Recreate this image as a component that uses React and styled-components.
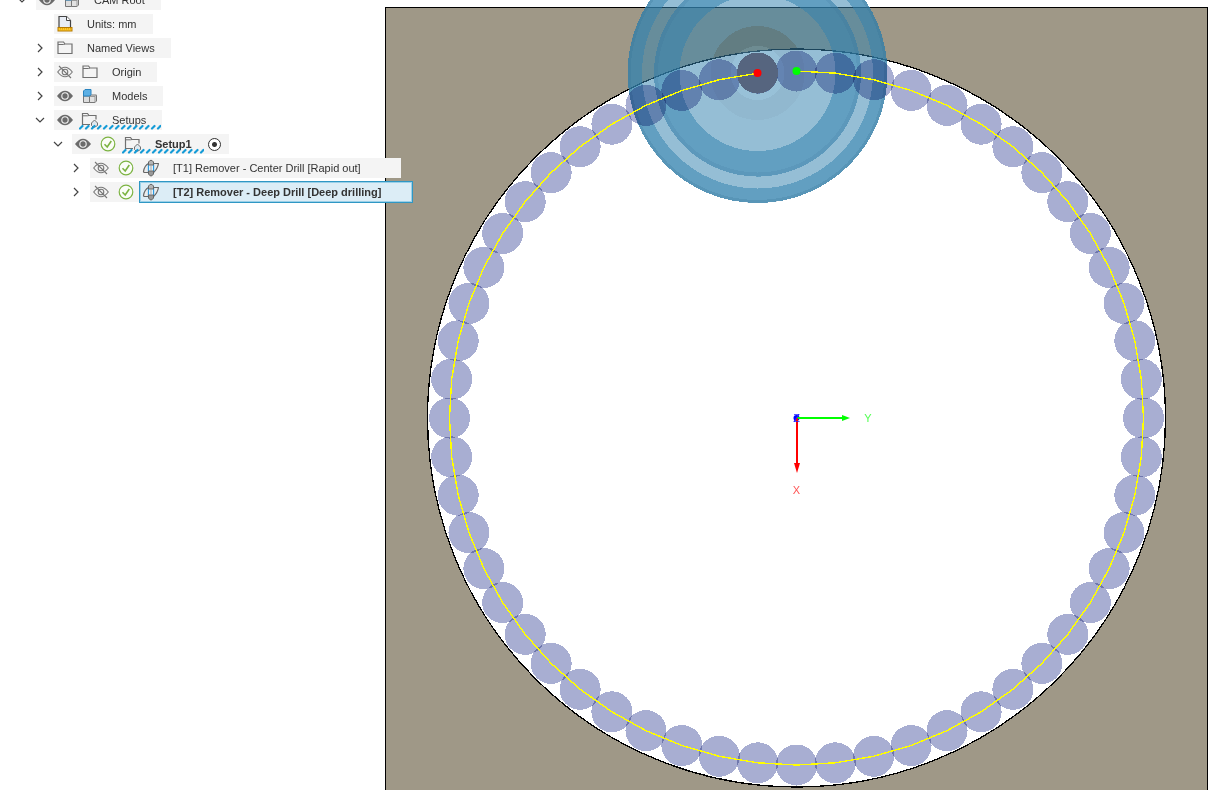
import React from "react";
import styled, { createGlobalStyle } from "styled-components";

const GlobalStyle = createGlobalStyle`
  *, *::before, *::after { box-sizing: border-box; }
  body { margin: 0; background: #fff; font-family: "Liberation Sans", Arial, sans-serif; font-size: 11px; color: #333; }
`;

const Workspace = styled.main`
  display: flex;
  height: 100vh;
  overflow: hidden;
`;

const Browser = styled.nav`
  position: relative;
  z-index: 1;
  flex: 0 0 385px;
  min-width: 0;
`;

const Tree = styled.ul`
  list-style: none;
  margin: -12px 0 0;
  padding: 0;
`;

const Row = styled.li`
  display: flex;
  align-items: center;
  height: 24px;
  width: max-content;
  padding-left: ${(p) => p.$level * 18 + 14}px;
`;

const IconButton = styled.button`
  display: flex;
  align-items: center;
  justify-content: center;
  width: 22px;
  height: 20px;
  margin: 0;
  padding: 0;
  border: 0;
  background: none;
  color: #6a6a6a;
`;

const Expander = styled(IconButton)`
  width: 16px;
  margin-right: 6px;
  color: #444;
`;

const ExpanderSpace = styled.span`
  width: 22px;
`;

const Item = styled.div`
  display: flex;
  align-items: center;
  gap: 3px;
  height: 20px;
  padding-right: ${(p) => (p.$selected ? 0 : p.$wide ? 40 : 16)}px;
  background: #f4f4f4;
`;

const Slot = styled.span`
  display: flex;
  align-items: center;
  justify-content: center;
  width: 22px;
  height: 20px;
`;

const Node = styled.div`
  position: relative;
  display: flex;
  align-items: center;
  gap: 11px;
`;

const SelectedNode = styled(Node)`
  height: 22px;
  margin-left: -1px;
  padding: 0 32px 0 1px;
  background: #dcedf6;
  box-shadow: inset 0 0 0 1px #2f97c4, inset 0 0 0 2px #9bd0e8;
`;

const Label = styled.span`
  line-height: 20px;
  white-space: nowrap;
  font-weight: ${(p) => (p.$bold ? 700 : 400)};
`;

const Squiggle = styled.svg`
  position: absolute;
  left: 0;
  bottom: 0;
  width: 82px;
  height: 8px;
`;

const ActiveRadio = styled.input`
  appearance: none;
  width: 13px;
  height: 13px;
  margin: 0 -8px 0 13px;
  border: 1px solid #333;
  border-radius: 50%;
  background: radial-gradient(circle, #333 2px, #fff 3px);
`;

const Viewport = styled.section`
  flex: 1 1 0;
  min-width: 0;
`;

const Scene = styled.svg`
  display: block;
  width: 100%;
  height: 100%;
`;

const Hole = styled.circle`
  fill: #a8aed2;
  mix-blend-mode: multiply;
`;

const Chevron = ({ open }) => (
  <svg width="10" height="10" viewBox="0 0 10 10" fill="none" stroke="currentColor" strokeWidth="1.200">
    <path d={open ? "M1 3 L5 7 L9 3" : "M3 1 L7 5 L3 9"} />
  </svg>
);

const Eye = () => (
  <svg width="16" height="12" viewBox="0 0 16 12">
    <path d="M0 6 Q8 -4.500 16 6 Q8 16.500 0 6Z" fill="#6b6b6b" />
    <circle cx="8" cy="6" r="3.200" fill="none" stroke="#f4f4f4" strokeWidth="1.100" />
  </svg>
);

const EyeOff = () => (
  <svg width="16" height="14" viewBox="0 0 16 14" fill="none" stroke="#777" strokeWidth="1.100">
    <path d="M.7 7 Q8 -2.500 15.300 7 Q8 16.500 .7 7Z" />
    <circle cx="8" cy="7" r="2.800" />
    <path d="M2 1 L14 13" />
  </svg>
);

const Check = () => (
  <svg width="16" height="16" viewBox="0 0 16 16" fill="none" stroke="#7cb342">
    <circle cx="8" cy="8" r="6.800" strokeWidth="1.200" fill="#fbfdf8" />
    <path d="M4.500 8.300 L7.200 11 L11.300 5" strokeWidth="1.600" />
  </svg>
);

const Folder = () => (
  <svg width="16" height="14" viewBox="0 0 16 14" fill="none" stroke="#707070" strokeWidth="1.200">
    <path d="M1 1 H6.500 L8 3 H15 V12.500 H1Z" />
    <path d="M1 3.500 H6.500 L8 3" fill="#ccc" strokeWidth="1" />
  </svg>
);

const SetupFolder = () => (
  <svg width="18" height="18" viewBox="0 0 18 18" fill="none" stroke="#707070" strokeWidth="1.200">
    <path d="M9 13.500 H1.500 V2.500 H6.500 L8 4.500 H15 V8.500" />
    <path d="M1.500 4.800 H6.500 L8 4.500" fill="#ccc" strokeWidth="1" />
    <path d="M10.500 14.500 V12 L13.500 9 L16.500 12 V14.500 L14 16 H12 Z" fill="#dfe9f0" strokeWidth="1" />
  </svg>
);

const Units = () => (
  <svg width="16" height="18" viewBox="0 0 16 18">
    <path d="M2 13 V1.500 H9.500 L13.500 5.500 V13Z" fill="#e8edf5" stroke="#444" strokeWidth="1.200" />
    <path d="M9.500 1.500 V5.500 H13.500" fill="#fff" stroke="#444" />
    <rect x="1" y="12.500" width="14" height="3.500" fill="#ffc928" stroke="#b67a00" />
    <path d="M3.500 13 v1.500 M5.500 13 v1.500 M7.500 13 v1.500 M9.500 13 v1.500 M11.500 13 v1.500 M13.500 13 v1.500" stroke="#d99a10" strokeWidth=".8" />
  </svg>
);

const Models = () => (
  <svg width="16" height="16" viewBox="0 0 16 16" strokeWidth="1" strokeLinejoin="round">
    <path d="M1.500 8 H7.500 V14.500 H1.500Z" fill="#ddd" stroke="#777" />
    <path d="M7.500 8.500 L9 7 H14.500 V13 L13 14.500 H7.500Z" fill="#e2e2e2" stroke="#777" />
    <path d="M7.500 8.500 H13 V14.500 M13 8.500 L14.500 7" fill="none" stroke="#999" />
    <path d="M1.500 3 L3 1.500 H9 V6.500 L7.500 8 H1.500Z" fill="#5db0e5" stroke="#2a84c0" />
  </svg>
);

const Drill = () => (
  <svg width="18" height="18" viewBox="0 0 18 18" strokeLinejoin="round">
    <path d="M1.500 12.500 Q2.500 6.500 6.500 4.500 H16.500 Q15.500 10 11.500 13.500 H2 Z" fill="#ececec" stroke="#666" strokeWidth="1.200" />
    <path d="M6.500 5 H11.500 V13 H6.500Z" fill="#fff" />
    <path d="M6.500 13.500 V4.500 M11.500 13.500 V4.500" stroke="#2d9be0" strokeWidth="1.300" />
    <path d="M6.500 6 V3 Q9 -.5 11.500 3 V6Z" fill="#b5b5b5" stroke="#666" />
    <path d="M6.500 12 H11.500 V15 Q9 19 6.500 15Z" fill="#999" stroke="#666" />
    <path d="M9 6 V12" stroke="#999" />
  </svg>
);

const icons = { folder: Folder, setup: SetupFolder, units: Units, models: Models, drill: Drill };

const Pending = () => (
  <Squiggle viewBox="0 0 82 8" aria-hidden="true">
    {Array.from({ length: 14 }, (_, i) => (
      <path key={i} d={`M${i * 6 + 1} 6.500 l2.500 -2.500`} stroke="#149bd7" strokeWidth="2.200" strokeLinecap="round" />
    ))}
  </Squiggle>
);

const nodes = [
  { level: 0, open: true, eye: "on", icon: "models", label: "CAM Root" },
  { level: 1, icon: "units", label: "Units: mm" },
  { level: 1, open: false, icon: "folder", label: "Named Views" },
  { level: 1, open: false, eye: "off", icon: "folder", label: "Origin" },
  { level: 1, open: false, eye: "on", icon: "models", label: "Models" },
  { level: 1, open: true, eye: "on", icon: "setup", label: "Setups", pending: true },
  { level: 2, open: true, eye: "on", check: true, icon: "setup", label: "Setup1", bold: true, pending: true, radio: true },
  { level: 3, open: false, eye: "off", check: true, icon: "drill", label: "[T1] Remover - Center Drill [Rapid out]", wide: true },
  { level: 3, open: false, eye: "off", check: true, icon: "drill", label: "[T2] Remover - Deep Drill [Deep drilling]", bold: true, selected: true },
];

function TreeRow({ node }) {
  const Icon = icons[node.icon];
  const Body = node.selected ? SelectedNode : Node;
  return (
    <Row $level={node.level}>
      {node.open === undefined ? (
        <ExpanderSpace />
      ) : (
        <Expander type="button" aria-expanded={node.open} aria-label={`Expand ${node.label}`}>
          <Chevron open={node.open} />
        </Expander>
      )}
      <Item $wide={node.wide} $selected={node.selected}>
        {node.eye && (
          <IconButton type="button" aria-label={`Visibility of ${node.label}`}>
            {node.eye === "on" ? <Eye /> : <EyeOff />}
          </IconButton>
        )}
        {node.check && <Slot><Check /></Slot>}
        <Body>
          <Slot><Icon /></Slot>
          <Label $bold={node.bold}>{node.label}</Label>
          {node.pending && <Pending />}
        </Body>
        {node.radio && <ActiveRadio type="radio" name="active-setup" defaultChecked aria-label={`Activate ${node.label}`} />}
      </Item>
    </Row>
  );
}

const CX = 796.5;
const CY = 418;
const PATH_R = 347;
const HOLES = Array.from({ length: 56 }, (_, i) => {
  const a = (i / 56) * Math.PI * 2;
  return [CX + PATH_R * Math.sin(a), CY - PATH_R * Math.cos(a)];
});
const TOOL = { cx: 757.5, cy: 73 };

function Toolpath() {
  return (
    <Scene viewBox="385 0 833 790" preserveAspectRatio="xMidYMin meet" role="img" aria-label="Toolpath preview">
      <rect x="385.5" y="7.5" width="822" height="800" fill="#9f9887" stroke="#000" shapeRendering="crispEdges" />
      <g shapeRendering="crispEdges">
        <circle {...TOOL} r="47" fill="#977b55" />
        <circle cx={CX} cy={CY} r="369" fill="#fff" stroke="#000" strokeWidth="1.300" />
        <circle {...TOOL} r="130" fill="#3382ae" fillOpacity=".52" />
        <path
          fill="#3382ae" fillOpacity=".52" fillRule="evenodd"
          d={[130, 115.5, 103.5, 78].map((r) => `M${TOOL.cx - r} ${TOOL.cy}a${r} ${r} 0 1 0 ${2 * r} 0a${r} ${r} 0 1 0 ${-2 * r} 0Z`).join("")}
        />
        <circle {...TOOL} r="128.500" fill="none" stroke="#34708f" strokeOpacity=".2" strokeWidth="3" />
        <circle {...TOOL} r="101.500" fill="none" stroke="#34708f" strokeOpacity=".13" strokeWidth="4" />
        <circle {...TOOL} r="37" fill="none" stroke="#5a6b70" strokeOpacity=".06" strokeWidth="20" />
        <circle {...TOOL} r="24" fill="none" stroke="#b0d8e8" strokeOpacity=".15" strokeWidth="6" />
        {HOLES.map(([x, y], i) => <Hole key={i} cx={x} cy={y} r="20.5" />)}
        <circle {...TOOL} r="20.500" fill="#56657f" />
        <polyline points={HOLES.map((p) => p.join(",")).join(" ")} fill="none" stroke="#ff0" strokeWidth="1.400" />
      </g>
      <circle {...TOOL} r="4" fill="#f00" />
      <circle cx={CX} cy="71" r="4" fill="#0f0" />
      <circle cx={CX} cy={CY} r="3" fill="#00f" />
      <path d="M797 418 H843" stroke="#0f0" strokeWidth="2" />
      <path d="M842 415 L850 418 L842 421Z" fill="#0f0" />
      <path d="M797 418 V465" stroke="#f00" strokeWidth="2" />
      <path d="M794 463 L797 473 L800 463Z" fill="#f00" />
      <text x="868" y="422" fontSize="11" textAnchor="middle" fill="#5f5">Y</text>
      <text x="796.5" y="494" fontSize="11" textAnchor="middle" fill="#f55">X</text>
      <text x="796.5" y="422" fontSize="11" textAnchor="middle" fill="#22f">Z</text>
    </Scene>
  );
}

export default function App() {
  return (
    <>
      <GlobalStyle />
      <Workspace>
        <Browser aria-label="Browser">
          <Tree>
            {nodes.map((n) => <TreeRow key={n.label} node={n} />)}
          </Tree>
        </Browser>
        <Viewport>
          <Toolpath />
        </Viewport>
      </Workspace>
    </>
  );
}
